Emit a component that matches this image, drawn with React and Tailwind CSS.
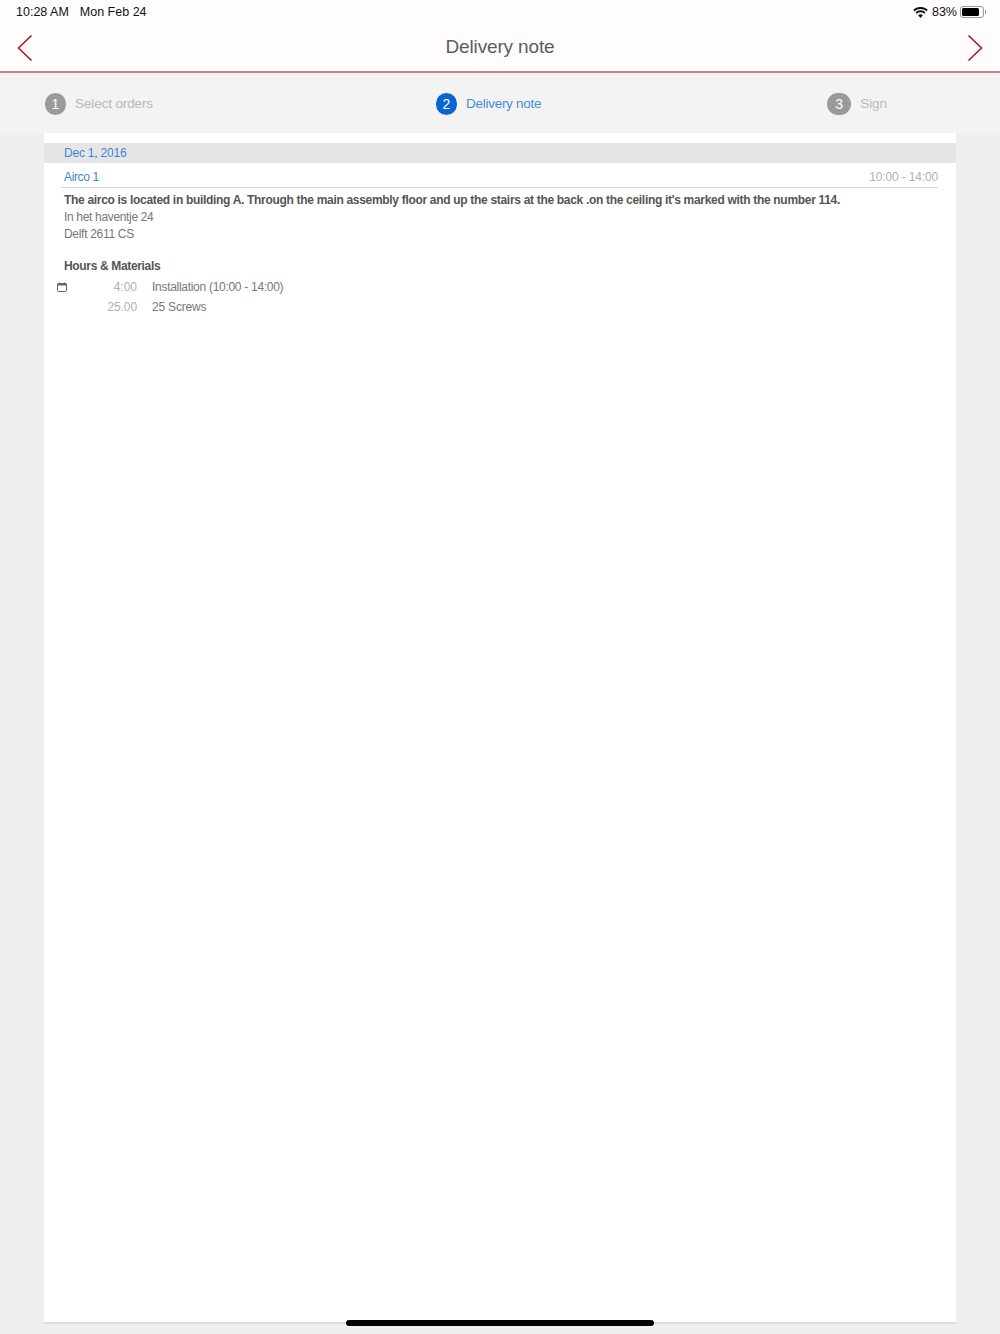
import React from 'react';

function Step({ n, label, active, wide, className }) {
  return (
    <div className={`flex items-center ${className}`}>
      <span className={`flex h-[22px] items-center justify-center rounded-full text-[14px] text-white ${wide ? 'w-[24px]' : 'w-[21px]'} ${active ? 'bg-[#0a64d2]' : 'bg-[#9a9a9a]'}`}>{n}</span>
      <span className={`ml-[9px] text-[13.5px] ${active ? 'tracking-[-0.27px] text-[#4a8cd9]' : 'tracking-[-0.12px] text-[#b8b8b8]'}`}>{label}</span>
    </div>
  );
}

function Chevron({ flip }) {
  return (
    <svg width="16" height="28" viewBox="0 0 16 28" fill="none" className={flip ? 'rotate-180' : ''}>
      <path d="M14.5 1.5 L1.5 14 L14.5 26.5" stroke="#a51c22" strokeWidth="1.6" />
    </svg>
  );
}

export default function App() {
  return (
    <div className="relative flex h-[1334px] w-[1000px] flex-col overflow-hidden bg-[#efefef] font-['Liberation_Sans',Arial,sans-serif]">
      {/* status bar + nav */}
      <header className="h-[73px] shrink-0 border-b-2 border-[#cc8483] bg-[#fffcfd]">
        <div className="flex h-[24px] items-center justify-between pl-[16px] pr-[14px] text-[12.5px] text-[#111]">
          <div className="flex gap-[11px]">
            <span>10:28 AM</span>
            <span>Mon Feb 24</span>
          </div>
          <div className="flex items-center">
            <svg width="15" height="11" viewBox="0 0 15 11" className="mr-[4px]">
              <path d="M7.5 11 L5.2 8.3 A3.4 3.4 0 0 1 9.8 8.3 Z M3.7 6.7 L2.5 5.3 A7.4 7.4 0 0 1 12.5 5.3 L11.3 6.7 A5.6 5.6 0 0 0 3.7 6.7 Z M1.5 4.2 L0.2 2.8 A10.8 10.8 0 0 1 14.8 2.8 L13.5 4.2 A9 9 0 0 0 1.5 4.2 Z" fill="#111" />
            </svg>
            <span>83%</span>
            <div className="ml-[3px] flex h-[12px] w-[24px] items-center rounded-[3px] border border-[#999] p-[1px]">
              <div className="h-full w-[17px] rounded-[1.5px] bg-black" />
            </div>
            <div className="ml-[1px] h-[4px] w-[1px] bg-[#999]" />
          </div>
        </div>
        <div className="flex h-[47px] items-center justify-between pl-[17px] pr-[17px]">
          <Chevron />
          <h1 className="text-[19px] font-normal tracking-[-0.15px] text-[#5c5c5c]">Delivery note</h1>
          <Chevron flip />
        </div>
      </header>

      {/* wizard steps */}
      <nav className="flex h-[60px] shrink-0 items-center bg-[#f3f3f3] pt-[2px]">
        <Step n="1" label="Select orders" className="ml-[45px]" />
        <Step n="2" label="Delivery note" active className="ml-[283px]" />
        <Step n="3" label="Sign" wide className="ml-[286px]" />
      </nav>

      <main className="mx-[44px] h-[1191px] shrink-0 border-b-2 border-[#dcdcdc] bg-white pt-[10px]">
        <div className="flex h-[20px] items-center bg-[#e5e5e5] pl-[20px] text-[12px] tracking-[-0.2px] text-[#3a85d6]">Dec 1, 2016</div>

        <div className="ml-[17px] mr-[18px] mt-[4px] flex h-[21px] items-center justify-between border-b border-[#d8d8d8] pl-[3px] text-[12px]">
          <span className="tracking-[-0.35px] text-[#3a85d6]">Airco 1</span>
          <span className="tracking-[-0.15px] text-[#b0b0b0]">10:00 - 14:00</span>
        </div>

        <div className="pl-[20px] pt-[4px] text-[12px] leading-[17.5px]">
          <p className="font-bold leading-[16.5px] tracking-[-0.31px] text-[#555]">The airco is located in building A. Through the main assembly floor and up the stairs at the back .on the ceiling it's marked with the number 114.</p>
          <p className="tracking-[-0.33px] text-[#777]">In het haventje 24</p>
          <p className="tracking-[-0.3px] text-[#777]">Delft 2611 CS</p>
          <p className="mt-[14px] font-bold tracking-[-0.34px] text-[#555]">Hours &amp; Materials</p>
        </div>

        <div className="mt-[2px] text-[12px] leading-[20px]">
          <div className="flex h-[20px] items-center">
            <svg width="10" height="10" viewBox="0 0 10 10" className="ml-[13px]" fill="none">
              <rect x="0.5" y="1.5" width="9" height="8" rx="0.8" stroke="#666" />
              <rect x="0.5" y="1.5" width="9" height="2" fill="#666" />
              <path d="M2.5 0.5v1.5M7.5 0.5v1.5" stroke="#666" />
            </svg>
            <span className="w-[70px] text-right text-[#b0b0b0]">4:00</span>
            <span className="ml-[15px] tracking-[-0.29px] text-[#777]">Installation (10:00 - 14:00)</span>
          </div>
          <div className="flex h-[20px] items-center">
            <span className="ml-[23px] w-[70px] text-right tracking-[-0.1px] text-[#b0b0b0]">25.00</span>
            <span className="ml-[15px] tracking-[-0.2px] text-[#777]">25 Screws</span>
          </div>
        </div>
      </main>

      {/* home indicator */}
      <div className="absolute bottom-[8px] left-[346px] h-[6px] w-[308px] rounded-full bg-black" />
    </div>
  );
}
